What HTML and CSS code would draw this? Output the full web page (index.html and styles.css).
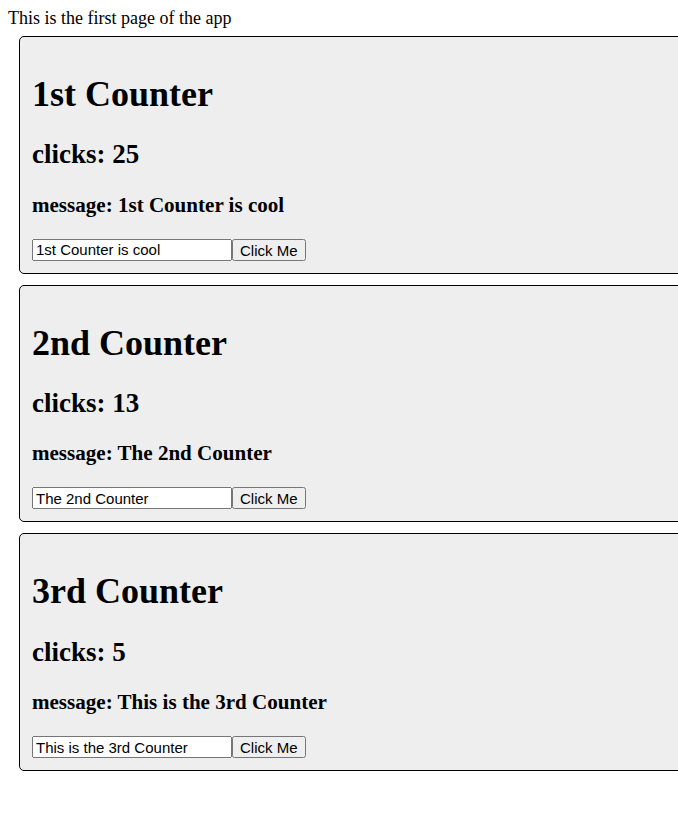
FILE: index.html
```html
<!DOCTYPE html>
<html>
<head>
<meta charset="utf-8">
<link rel="stylesheet" href="styles.css">
</head>
<body>
<div class="intro">This is the first page of the app</div>
<div class="card">
  <h1>1st Counter</h1>
  <h2>clicks: 25</h2>
  <h3>message: 1st Counter is cool</h3>
  <div class="row"><input class="field" type="text" value="1st Counter is cool"><button class="btn">Click Me</button></div>
</div>
<div class="card">
  <h1>2nd Counter</h1>
  <h2>clicks: 13</h2>
  <h3>message: The 2nd Counter</h3>
  <div class="row"><input class="field" type="text" value="The 2nd Counter"><button class="btn">Click Me</button></div>
</div>
<div class="card">
  <h1>3rd Counter</h1>
  <h2>clicks: 5</h2>
  <h3>message: This is the 3rd Counter</h3>
  <div class="row"><input class="field" type="text" value="This is the 3rd Counter"><button class="btn">Click Me</button></div>
</div>
</body>
</html>
```
FILE: styles.css
```css
html {
  overflow: hidden;
}
body {
  margin: 8px 0 8px 8px;
  font-family: "Liberation Serif", "Times New Roman", serif;
  font-size: 18px;
}
.intro {
  margin-bottom: 7px;
}
.card {
  margin: 0 -20px 11px 11px;
  padding: 12px;
  border: 1px solid #000;
  border-radius: 5px;
  background: #eeeeee;
}
.card h1 {
  font-size: 2em;
  margin: 0.67em 0;
}
.card h2 {
  font-size: 1.5em;
  margin: 0.83em 0;
}
.card h3 {
  font-size: 1.17em;
  margin: 1em 0;
}
.row {
  display: flex;
}
.field {
  width: 200px;
  height: 22px;
  box-sizing: border-box;
  font-family: "Liberation Sans", Arial, sans-serif;
  font-size: 15px;
  margin: 0;
  color: #000;
}
.btn {
  height: 22px;
  box-sizing: border-box;
  font-family: "Liberation Sans", Arial, sans-serif;
  font-size: 15px;
  margin: 0;
  color: #000;
}
```
